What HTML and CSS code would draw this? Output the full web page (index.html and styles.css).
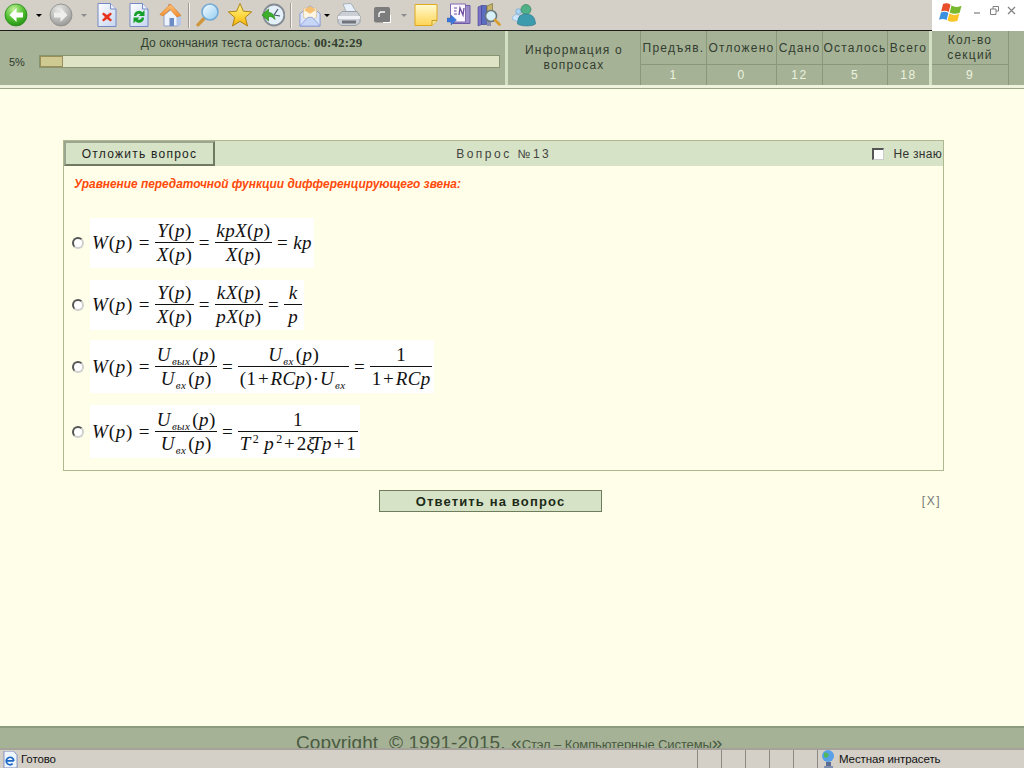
FILE: index.html
```html
<!DOCTYPE html>
<html lang="ru">
<head>
<meta charset="utf-8">
<title>Тест</title>
<link rel="stylesheet" href="styles.css">
</head>
<body>
<div class="toolbar">
  <div class="tools">
    <div class="tool"><svg class="ic24" viewBox="0 0 24 24"><defs>
      <radialGradient id="gGreen" cx=".4" cy=".25" r=".85"><stop offset="0" stop-color="#c4f29a"/><stop offset=".55" stop-color="#4cbc2c"/><stop offset="1" stop-color="#1c8414"/></radialGradient>
      <radialGradient id="gGray" cx=".4" cy=".25" r=".85"><stop offset="0" stop-color="#e8e8e6"/><stop offset=".6" stop-color="#b4b4b2"/><stop offset="1" stop-color="#8e8e8c"/></radialGradient>
      <linearGradient id="gPage" x1="0" y1="0" x2="1" y2="1"><stop offset="0" stop-color="#ffffff"/><stop offset="1" stop-color="#c4d4f0"/></linearGradient>
      <linearGradient id="gStar" x1="0" y1="0" x2="0" y2="1"><stop offset="0" stop-color="#fff69a"/><stop offset=".6" stop-color="#ffd436"/><stop offset="1" stop-color="#f2ac0c"/></linearGradient>
      <linearGradient id="gNote" x1="0" y1="0" x2="0" y2="1"><stop offset="0" stop-color="#fffad0"/><stop offset="1" stop-color="#fdd454"/></linearGradient>
      <linearGradient id="gLens" x1="0" y1="0" x2="1" y2="1"><stop offset="0" stop-color="#f8fdff"/><stop offset="1" stop-color="#92cdf2"/></linearGradient>
      <linearGradient id="gRoof" x1="0" y1="0" x2="0" y2="1"><stop offset="0" stop-color="#ffc078"/><stop offset="1" stop-color="#f08c2c"/></linearGradient>
    </defs><circle cx="12" cy="12" r="11" fill="url(#gGreen)" stroke="#2a8a1a" stroke-width=".8"/><path d="M12.500 5 5.500 12l7 7v-4.400h6.500v-5.200h-6.500z" fill="#fff"/></svg></div>
    <div class="tool"><span class="caret"></span></div>
    <div class="tool"><svg class="ic24" viewBox="0 0 24 24"><circle cx="12" cy="12" r="11" fill="url(#gGray)" stroke="#8a8a88" stroke-width=".8"/><path d="M11.500 5 18.500 12l-7 7v-4.400H5v-5.200h6.500z" fill="#eeeeec"/></svg></div>
    <div class="tool"><span class="caret caret-off"></span></div>
    <div class="tool"><svg class="ic24" viewBox="0 0 24 24"><path d="M3 .5h12.500L21 6v17.500H3z" fill="url(#gPage)" stroke="#7488c4"/><path d="M15.500 .5V6H21" fill="#eaf0fc" stroke="#7488c4"/><path d="m8.500 9.500 3.500 2.500 3.500-2.500 1.500 1.500-3 3 3 3-1.500 1.500-3.500-2.500-3.500 2.500-1.500-1.500 3-3-3-3z" fill="#e8341c"/></svg></div>
    <div class="tool"><svg class="ic24" viewBox="0 0 24 24"><path d="M3 .5h12.500L21 6v17.500H3z" fill="url(#gPage)" stroke="#7488c4"/><path d="M15.500 .5V6H21" fill="#eaf0fc" stroke="#7488c4"/><path d="M7 13a5 5 0 0 1 8.500-3.800L17.500 7v6h-6l2-1.700A2.800 2.800 0 0 0 9.300 13zM17 14.500a5 5 0 0 1-8.500 3.800L6.500 20.500v-6h6l-2 1.700a2.800 2.800 0 0 0 4.200-1.700z" fill="#16a02a"/></svg></div>
    <div class="tool"><svg class="ic24" viewBox="0 0 24 24"><path d="M5 12v11h14V9l-5-4z" fill="#eef2fa" stroke="#90a0c4"/><path d="M17.500 9.500v13H22V13z" fill="#b4c8ea"/><path d="M10.500 23v-8h4.500v8z" fill="#6c8cc4"/><path d="M9.500 1.500h2.500V5L9.500 7z" fill="#c04028"/><path d="M.8 11.500 11 1.500l1.500.5 9.500 10.500-4 1.500-7-7.500-7 6.500z" fill="url(#gRoof)" stroke="#d07820" stroke-width=".5"/></svg></div>
    <div class="tool"><span class="sep"></span></div>
    <div class="tool"><svg class="ic24" viewBox="0 0 24 24"><path d="M8 15.500 2 21.800" stroke="#d0963c" stroke-width="3.400" stroke-linecap="round" fill="none"/><circle cx="14" cy="9" r="8" fill="url(#gLens)" stroke="#74a8d4" stroke-width="1.600"/></svg></div>
    <div class="tool"><svg class="ic24" viewBox="0 0 24 24"><path d="m12 .5 3.300 7.700 8.400.7-6.400 5.400 2.200 8.700L12 18.300 4.500 23l2.200-8.700L.3 8.900l8.400-.7z" fill="url(#gStar)" stroke="#b08410"/></svg></div>
    <div class="tool"><svg class="ic24" viewBox="0 0 24 24"><circle cx="13" cy="12" r="10.400" fill="#e4f0fa" stroke="#848c94" stroke-width="2"/><path d="M17 6 13 12M13 12l6 1" stroke="#405060" stroke-width="1.200" fill="none"/><path d="M1 12 7.500 6v3.500c3.500 0 6 2.500 6.500 7-2-2.500-4-3.300-6.500-3V18z" fill="#3cb028" stroke="#1e7a12" stroke-width=".6"/></svg></div>
    <div class="tool"><span class="sep"></span></div>
    <div class="tool"><svg class="ic22" viewBox="0 0 24 24"><path d="M1 10 12 1.500 23 10v13.500H1z" fill="#dbe6fa" stroke="#8494d0"/><path d="M5 4h14v10l-7 4-7-4z" fill="#fdf6e4" stroke="#d8b478" stroke-width=".6"/><path d="M5.500 6 12 1.500 18.500 6 12 10z" fill="#f6c070"/><path d="M1 23.500 9.500 14h5l8.500 9.500z" fill="#c6d6f6" stroke="#8494d0" stroke-width=".8"/></svg></div>
    <div class="tool"><span class="caret"></span></div>
    <div class="tool"><svg class="ic24" viewBox="0 0 24 24"><path d="m6 1 8-.5 5 8H9z" fill="#e8f0fa" stroke="#9ca4b0" stroke-width=".8"/><path d="M1 13 5 8.500h15L23 13v6.500l-4 3H4l-3-3z" fill="#ccd0d6" stroke="#8c949c" stroke-width=".8"/><path d="M1 13h22v3H1z" fill="#f0f2f6"/><path d="M5 17.500h14v3H5z" fill="#70747c"/></svg></div>
    <div class="tool"><svg class="ic16" viewBox="0 0 17 16"><rect width="16" height="15.500" rx="2" fill="#7c7c7c"/><path d="M5 10V6.500L6.500 5H11" fill="none" stroke="#fff" stroke-width="1.300"/><path d="M9 15.500h7.500V8" stroke="#fff" fill="none"/></svg></div>
    <div class="tool"><span class="caret caret-off"></span></div>
    <div class="tool"><svg class="ic24" viewBox="0 0 24 24"><path d="M1 1.500h22v16l-5 5H1z" fill="url(#gNote)" stroke="#e0a81c"/><path d="M18 22.500v-5h5" fill="#f8e888" stroke="#c89c28"/></svg></div>
    <div class="tool"><svg class="ic24" viewBox="0 0 24 24"><path d="M6 2.500h17v18H6z" fill="#9c8cc8" stroke="#6c5ca8"/><path d="M3.500 1h15v18h-15z" fill="#fbf9ff" stroke="#8468b0"/><path d="M7 5h3M7 8h2.500M7 11h3" stroke="#6c4c9c" stroke-width="1.200"/><path d="M12 12l1-7 3 7 1-7" fill="none" stroke="#6c4c9c" stroke-width="1.300"/><path d="M0 15h4v-3l5.500 5-5.500 5v-3H0z" fill="#3c78d8" stroke="#2c5cac" stroke-width=".4"/></svg></div>
    <div class="tool"><svg class="ic24" viewBox="0 0 24 24"><path d="M1 4 4.500 2.500v19L1 23z" fill="#7a72c8" stroke="#484490" stroke-width=".6"/><path d="M4.500 2.500h5v19h-5z" fill="#5c6cc0" stroke="#38408c" stroke-width=".6"/><path d="M10 3 15.500 .5V10H10z" fill="#c8b468" stroke="#706830" stroke-width=".6"/><path d="M10 16h4v7h-4z" fill="#8c90b0"/><circle cx="14" cy="13" r="5.500" fill="#d8f0f8" stroke="#68787c" stroke-width="1.600"/><path d="m18 17 4.500 4.500" stroke="#d89c2c" stroke-width="2.600" stroke-linecap="round"/></svg></div>
    <div class="tool"><svg class="ic24" viewBox="0 0 24 24"><circle cx="6.500" cy="8.500" r="2.800" fill="#a8d4f4" stroke="#5c94c4" stroke-width=".5"/><path d="M0 16c.5-3 2-4.500 5.500-4.500L8 13l-2 6z" fill="#cfe6fa" stroke="#6ca0d0" stroke-width=".5"/><circle cx="14" cy="6.500" r="5" fill="#50b088" stroke="#2c7c58" stroke-width=".6"/><path d="M5.500 21c0-8 3.500-10 8.500-10s9 2 9.500 10c-3 2.500-14 2.500-18 0z" fill="#3c9cae" stroke="#2c7088" stroke-width=".6"/></svg></div>
  </div>
  <div class="winbox">
    <svg class="winlogo" viewBox="0 0 24 22"><path d="M4 2C6.500 1 9 1 11.500 2.800L9.700 10C7.200 8.500 4.500 8.500 2.200 9.500z" fill="#e8502c"/><path d="M12.500 3.500c3 1.800 6 1.800 10 .2l-1.800 7c-3.500 1.500-7 1.500-10-.2z" fill="#78b82c"/><path d="M2 10.500c2.500-1 5-1 7.400.6l-1.800 7C5 16.600 2.500 16.500 0 17.800z" fill="#3c90e0"/><path d="M10.400 11.500c3 1.800 6 1.800 10 .2l-1.900 7c-3.500 1.500-7 1.600-10-.2z" fill="#f8c428"/></svg>
    <div class="wincontrols">
      <svg class="winctl" viewBox="0 0 9 9"><path d="M1 7h6" stroke="#909090" stroke-width="1.400"/></svg>
      <svg class="winctl" viewBox="0 0 9 9"><path d="M3 3V.500h5.500V5H6M.500 3h5.500v5.500H.500z" fill="none" stroke="#808080"/></svg>
      <svg class="winctl" viewBox="0 0 9 9"><path d="m1 1 7 7M8 1 1 8" stroke="#808080" stroke-width="1.200"/></svg>
    </div>
  </div>
</div>

<header class="hdr">
  <div class="timer">
    <div class="timer-text">До окончания теста осталось: <b>00:42:29</b></div>
    <div class="progress-row">
      <span class="pct">5%</span>
      <div class="progress"><div class="progress-fill" style="width:5%"></div></div>
    </div>
  </div>
  <div class="info">Информация о вопросах</div>
  <div class="stats">
    <div class="stat s1"><div class="st">Предъяв.</div><div class="sv">1</div></div>
    <div class="stat s2"><div class="st">Отложено</div><div class="sv">0</div></div>
    <div class="stat s3"><div class="st">Сдано</div><div class="sv">12</div></div>
    <div class="stat s4"><div class="st">Осталось</div><div class="sv">5</div></div>
    <div class="stat s5"><div class="st">Всего</div><div class="sv">18</div></div>
  </div>
  <div class="stat sections"><div class="st st-wrap">Кол-во секций</div><div class="sv">9</div></div>
  <div class="hdr-rest"></div>
</header>
<div class="hdr-band"></div>

<main class="main">
  <section class="panel">
    <div class="panel-head">
      <button class="defer" type="button">Отложить вопрос</button>
      <div class="qtitle">Вопрос №13</div>
      <label class="dunno"><input class="chk" type="checkbox"><span>Не знаю</span></label>
    </div>
    <p class="question">Уравнение передаточной функции дифференцирующего звена:</p>
    <div class="options">
      <label class="opt o1"><input class="rad" type="radio" name="a">
        <span class="fm">
          <span class="tx"><i>W</i>(<i>p</i>) =</span>
          <span class="fr"><span class="nu"><i>Y</i>(<i>p</i>)</span><span class="de"><i>X</i>(<i>p</i>)</span></span>
          <span class="tx">=</span>
          <span class="fr"><span class="nu"><i>kpX</i>(<i>p</i>)</span><span class="de"><i>X</i>(<i>p</i>)</span></span>
          <span class="tx">= <i>kp</i></span>
        </span>
      </label>
      <label class="opt o2"><input class="rad" type="radio" name="a">
        <span class="fm">
          <span class="tx"><i>W</i>(<i>p</i>) =</span>
          <span class="fr"><span class="nu"><i>Y</i>(<i>p</i>)</span><span class="de"><i>X</i>(<i>p</i>)</span></span>
          <span class="tx">=</span>
          <span class="fr"><span class="nu"><i>kX</i>(<i>p</i>)</span><span class="de"><i>pX</i>(<i>p</i>)</span></span>
          <span class="tx">=</span>
          <span class="fr fr-k"><span class="nu"><i>k</i></span><span class="de"><i>p</i></span></span>
        </span>
      </label>
      <label class="opt o3"><input class="rad" type="radio" name="a">
        <span class="fm">
          <span class="tx"><i>W</i>(<i>p</i>) =</span>
          <span class="fr"><span class="nu"><i>U</i><sub>вых</sub>(<i>p</i>)</span><span class="de"><i>U</i><sub>вх</sub>(<i>p</i>)</span></span>
          <span class="tx">=</span>
          <span class="fr"><span class="nu"><i>U</i><sub>вх</sub>(<i>p</i>)</span><span class="de">(1<span class="op">+</span><i>RCp</i>)<span class="dot">·</span><i>U</i><sub>вх</sub></span></span>
          <span class="tx">=</span>
          <span class="fr"><span class="nu">1</span><span class="de">1<span class="op">+</span><i>RCp</i></span></span>
        </span>
      </label>
      <label class="opt o4"><input class="rad" type="radio" name="a">
        <span class="fm">
          <span class="tx"><i>W</i>(<i>p</i>) =</span>
          <span class="fr"><span class="nu"><i>U</i><sub>вых</sub>(<i>p</i>)</span><span class="de"><i>U</i><sub>вх</sub>(<i>p</i>)</span></span>
          <span class="tx">=</span>
          <span class="fr"><span class="nu">1</span><span class="de"><i>T</i><sup>2</sup> <i>p</i><sup>2</sup><span class="op">+</span>2<i class="xi">ξ</i><i>Tp</i><span class="op">+</span>1</span></span>
        </span>
      </label>
    </div>
  </section>
  <div class="actions">
    <button class="answer" type="button">Ответить на вопрос</button>
    <span class="closex">[X]</span>
  </div>
</main>

<footer class="foot">
  <div class="copy">Copyright &nbsp;© 1991-2015. <span class="guil">«</span><span class="firm">Стэл – Компьютерные Системы</span><span class="guil">»</span></div>
</footer>

<div class="status">
  <svg class="st-ic" viewBox="0 0 16 18"><path d="M1 0h10l4 4v14H1z" fill="#eef4fc" stroke="#7c8cb8"/><path d="M11.500 10.500a4 4 0 1 0-1.200 3M4 10.500h7.500" fill="none" stroke="#1c68c8" stroke-width="1.800"/></svg>
  <span class="st-text">Готово</span>
  <div class="st-cells"><span class="cell"></span><span class="cell"></span><span class="cell"></span><span class="cell"></span><span class="cell"></span></div>
  <div class="st-zone">
    <svg class="zone-ic" viewBox="0 0 16 18"><circle cx="7" cy="6" r="6" fill="#58a0e8"/><path d="M3 3c2-1 4 0 5 2l-2 3-3-1z" fill="#50b858"/><path d="M5 12h5v4H5z" fill="#5c6c90"/><path d="M3 16h9v2H3z" fill="#8090b0"/></svg>
    <span class="st-text">Местная интрасеть</span>
  </div>
</div>
</body>
</html>
```
FILE: styles.css
```css
* { box-sizing: border-box; }
html, body { margin: 0; height: 100%; overflow: hidden; }
body {
  display: flex;
  flex-direction: column;
  height: 768px;
  font-family: "Liberation Sans", Arial, sans-serif;
  background: #ffffe9;
  color: #333;
}
svg { display: block; }

/* browser toolbar */
.toolbar { display: flex; height: 31px; background: #d4d0c8; flex: none; }
.tools {
  flex: 1;
  height: 31px;
  border-bottom: 1px solid #1c1c1c;
  display: grid;
  grid-template-columns: 22px 23px 22px 24px 22px 42px 21px 16px 22px 42px 24px 12px 26px 8px 36px 30px 14px 30px 36px 24px 46px;
  align-items: center;
  justify-items: center;
  padding-left: 5px;
}
.tool { display: flex; align-items: center; justify-content: center; }
.ic24 { width: 24px; height: 24px; flex: none; }
.ic22 { width: 22px; height: 23px; flex: none; }
.ic16 { width: 17px; height: 16px; flex: none; }
.caret { width: 0; height: 0; border: 3px solid transparent; border-top: 3px solid #000; border-bottom: 0; }
.caret-off { border-top-color: #8c8c8c; }
.sep { width: 2px; height: 25px; background: #f4f2ee; border-left: 1px solid #a09c94; }
.winbox { width: 92px; height: 31px; background: #fff; display: flex; padding: 2px 0 0 7px; flex: none; }
.winlogo { width: 24px; height: 22px; }
.wincontrols { display: flex; gap: 8px; margin: 4px 0 0 10px; }
.winctl { width: 9px; height: 9px; }

/* test header */
.hdr { display: flex; height: 54px; flex: none; background: #a5b296; color: #333d30; font-size: 12px; }
.timer { width: 505px; flex: none; padding: 4px 5px 0 9px; }
.timer-text { text-align: center; height: 18px; font-size: 12px; letter-spacing: .09px; padding-right: 6px; }
.timer-text b { font-family: "Liberation Serif", serif; font-size: 13px; }
.progress-row { display: flex; align-items: center; margin-top: 2px; }
.pct { width: 30px; font-size: 11px; color: #2f3a2c; }
.progress { flex: 1; height: 13px; background: #dee3c6; border: 1px solid #87946f; }
.progress-fill { height: 100%; background: #cfc992; border: 1px solid #9a8f5c; }
.info {
  width: 136px;
  flex: none;
  border-left: 3px solid #d5dfc4;
  border-right: 1px solid #8a9879;
  text-align: center;
  letter-spacing: 1.200px;
  line-height: 15px;
  padding: 12px 10px 0;
}
.stats { display: flex; flex: none; border-right: 3px solid #d5dfc4; }
.stat { display: flex; flex-direction: column; flex: none; border-right: 1px solid #8a9879; }
.s1 { width: 66px; }
.s2 { width: 70px; }
.s3 { width: 46px; }
.s4 { width: 65px; }
.s5 { width: 41px; border-right: 0; }
.st {
  height: 35px;
  border-bottom: 1px solid #8a9879;
  display: flex;
  align-items: center;
  justify-content: center;
  text-align: center;
  letter-spacing: 1.200px;
  white-space: nowrap;
  padding-top: 1px;
}
.st-wrap { white-space: normal; line-height: 15px; padding: 0 12px; }
.sv { flex: 1; text-align: center; color: #edf2df; letter-spacing: 1.500px; line-height: 20px; }
.sections { width: 77px; }
.hdr-rest { flex: 1; }
.hdr-band { height: 4px; flex: none; border-bottom: 1px solid #9aa887; background: #f0f3dc; }

/* question */
.main { flex: 1; padding: 51px 0 0 63px; min-height: 0; }
.panel { width: 881px; height: 331px; border: 1px solid #b0b890; }
.panel-head { display: flex; align-items: center; height: 25px; background: #d6e3c6; }
.defer {
  width: 151px;
  height: 25px;
  background: #d6e3c6;
  border: 2px solid;
  border-color: #9aa690 #6f7b60 #6f7b60 #9aa690;
  font: 12px "Liberation Sans", Arial, sans-serif;
  letter-spacing: 1.250px;
  color: #222;
  padding: 0;
}
.qtitle { flex: 1; text-align: center; font-size: 12px; letter-spacing: 2.500px; color: #444; padding-right: 80px; }
.dunno { display: flex; align-items: center; font-size: 12px; color: #333; letter-spacing: .3px; padding-right: 1px; }
.chk {
  appearance: none;
  width: 12px;
  height: 12px;
  margin: 0 9px 0 0;
  background: #fff;
  border: 2px solid;
  border-width: 2px 1px 1px 2px;
  border-color: #555 #ccc #ccc #555;
}
.question { margin: 11px 0 0 10px; font: italic bold 11.900px/14px "Liberation Sans", Arial, sans-serif; color: #ff4a0c; }

/* answers */
.options { display: flex; flex-direction: column; margin: 27px 0 0 8px; }
.opt { display: flex; align-items: center; }
.o1 { height: 50px; }
.o2 { height: 50px; margin-top: 12px; }
.o3 { height: 53px; margin-top: 10px; }
.o4 { height: 53px; margin-top: 12px; }
.rad {
  appearance: none;
  width: 12px;
  height: 12px;
  margin: 0 6px 0 0;
  border-radius: 50%;
  border: 2px solid #6a6a6a;
  border-color: #555 #cfcfcf #cfcfcf #555;
  background: #fff;
  flex: none;
}
.fm {
  display: flex;
  align-items: center;
  height: 100%;
  background: #fff;
  padding: 0 2px;
  font: 19px/24px "Liberation Serif", "Times New Roman", serif;
  letter-spacing: .4px;
  color: #111;
  white-space: pre;
}
.tx { margin-right: 5px; }
.tx:first-child { margin-right: 5px; letter-spacing: .8px; }
.tx:last-child { margin-right: 0; }
.fr { display: flex; flex-direction: column; align-items: center; margin-right: 5px; }
.fr:last-child { margin-right: 0; }
.nu, .de { padding: 0 1.500px; display: block; height: 24px; text-align: center; }
.nu { border-bottom: 1px solid #111; align-self: stretch; }
.fr-k .nu, .fr-k .de { padding: 0 4px; }
.op { margin: 0 1.500px; }
.dot { margin: 0 .5px; }
sub { font-size: 11px; font-style: italic; vertical-align: -4px; line-height: 0; margin: 0 2px 0 1px; }
sup { font-size: 12px; vertical-align: 7px; line-height: 0; margin-left: 2px; }
.xi { margin-right: -4px; }

/* actions */
.actions { display: flex; align-items: center; width: 881px; margin-top: 19px; }
.answer {
  width: 223px;
  height: 22px;
  margin-left: 316px;
  background: #d6e3c6;
  border: 1px solid #6f7d5d;
  font: bold 13px "Liberation Sans", Arial, sans-serif;
  letter-spacing: 1.150px;
  color: #1c2a18;
  padding: 0;
}
.closex { margin-left: auto; margin-right: 3px; font-size: 12px; letter-spacing: 1.500px; color: #777; }

/* footer */
.foot { height: 22px; flex: none; background: #a5b296; border-top: 2px solid #8e9c7e; overflow: hidden; padding-left: 296px; color: #4a5a42; }
.copy { font-size: 19px; line-height: 20px; white-space: nowrap; padding-top: 5px; letter-spacing: .1px; }
.firm { font-size: 13px; letter-spacing: -.1px; }
.guil { font-size: 19px; }

/* status bar */
.status { height: 20px; flex: none; display: flex; align-items: center; background: #d4d0c8; border-top: 2px solid #a5a29a; padding-left: 3px; color: #111; }
.st-ic { width: 15px; height: 17px; margin-right: 3px; }
.st-text { font-size: 11.500px; letter-spacing: -.1px; }
.st-cells { display: flex; margin-left: auto; height: 100%; }
.cell { width: 24px; border-left: 1px solid #8c8a84; }
.st-zone { display: flex; align-items: center; width: 207px; height: 100%; border-left: 1px solid #8c8a84; padding-left: 3px; }
.zone-ic { width: 16px; height: 18px; margin-right: 2px; }
```
